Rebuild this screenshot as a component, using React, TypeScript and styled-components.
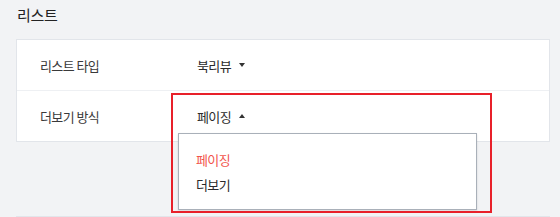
import React from "react";
import styled, { createGlobalStyle } from "styled-components";

const Global = createGlobalStyle`
  html, body { margin: 0; padding: 0; background: #f2f3f5; }
  body { font-family: "Noto Sans CJK KR", "Noto Sans", sans-serif; color: #333; }
  * { box-sizing: border-box; }
`;

const Page = styled.div`
  width: 560px;
  height: 217px;
  overflow: hidden;
  padding: 0 10px 0 16px;
  display: flex;
  flex-direction: column;
`;

const Title = styled.h2`
  margin: 0;
  height: 39px;
  flex-shrink: 0;
  padding-top: 5px;
  padding-left: 1px;
  font-size: 15px;
  font-weight: 400;
  line-height: 20px;
  color: #222;
  letter-spacing: -0.3px;
`;

const Card = styled.div`
  position: relative;
  width: 534px;
  background: #fff;
  border: 1px solid #e2e5ea;
  flex-shrink: 0;
`;

const Row = styled.div<{ $last?: boolean }>`
  display: grid;
  grid-template-columns: 157px 1fr;
  align-items: center;
  height: ${(p) => (p.$last ? 50 : 51)}px;
  padding-left: 23px;
  border-bottom: ${(p) => (p.$last ? "none" : "1px solid #eef0f3")};
`;

const Label = styled.div`
  font-size: 13px;
  color: #3a3a3a;
  letter-spacing: -0.6px;
`;

const Trigger = styled.div`
  display: flex;
  align-items: center;
  gap: 8px;
  font-size: 13px;
  color: #2a2a2a;
  letter-spacing: -0.6px;
`;

const Caret = styled.span<{ $up?: boolean }>`
  width: 0;
  height: 0;
  border-left: 3.5px solid transparent;
  border-right: 3.5px solid transparent;
  ${(p) =>
    p.$up ? "border-bottom: 4px solid #333;" : "border-top: 4px solid #333;"}
`;

const Highlight = styled.div`
  position: absolute;
  left: 154px;
  top: 53px;
  width: 321px;
  height: 120px;
  border: 2px solid #e8202a;
  pointer-events: none;
  z-index: 2;
`;

const Menu = styled.ul`
  position: absolute;
  left: 161px;
  top: 93px;
  width: 299px;
  height: 77px;
  margin: 0;
  padding: 13px 0 0 17px;
  list-style: none;
  background: #fff;
  border: 1px solid #a9b0b9;
  box-shadow: 0 1px 2px rgba(0, 0, 0, 0.12);
  z-index: 1;
`;

const Item = styled.li<{ $active?: boolean }>`
  height: 25px;
  line-height: 25px;
  font-size: 13px;
  letter-spacing: -0.6px;
  color: ${(p) => (p.$active ? "#f2544c" : "#2a2a2a")};
`;

const NextCard = styled.div`
  margin-top: 74px;
  width: 534px;
  height: 20px;
  background: #fff;
  border: 1px solid #e2e5ea;
  flex-shrink: 0;
`;

export default function App() {
  return (
    <>
      <Global />
      <Page>
        <Title>리스트</Title>
        <Card>
          <Row>
            <Label>리스트 타입</Label>
            <Trigger>
              북리뷰 <Caret />
            </Trigger>
          </Row>
          <Row $last>
            <Label>더보기 방식</Label>
            <Trigger>
              페이징 <Caret $up />
            </Trigger>
          </Row>
          <Menu>
            <Item $active>페이징</Item>
            <Item>더보기</Item>
          </Menu>
          <Highlight />
        </Card>
        <NextCard />
      </Page>
    </>
  );
}
